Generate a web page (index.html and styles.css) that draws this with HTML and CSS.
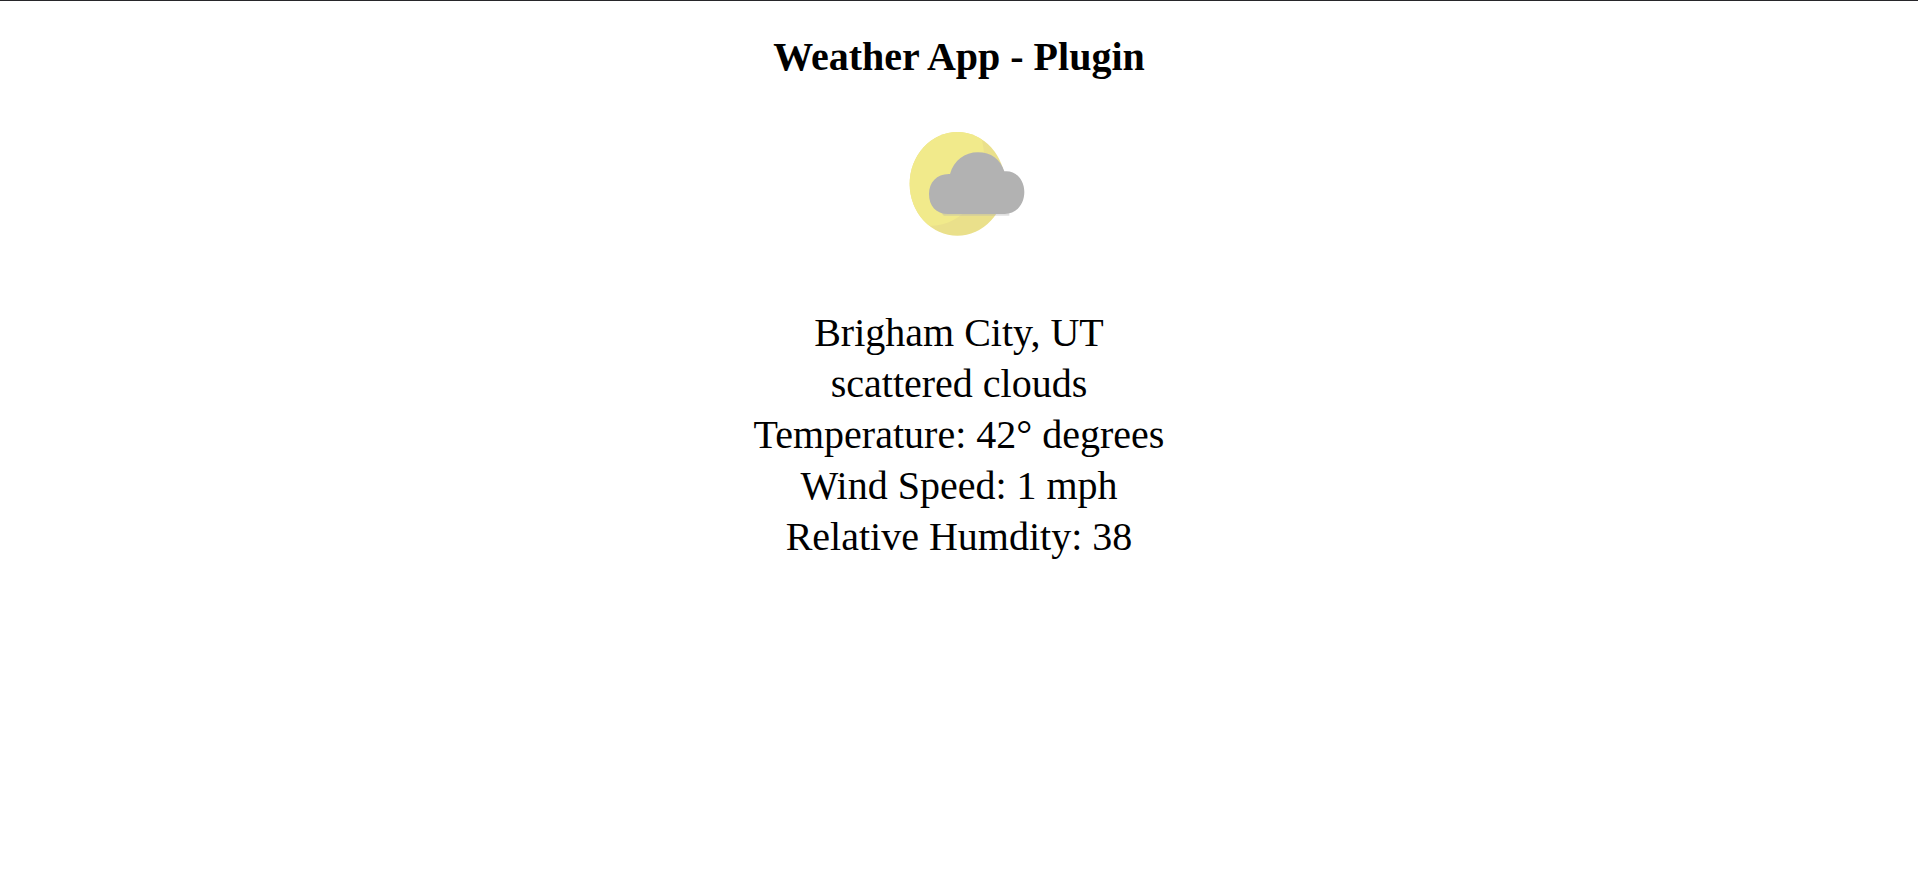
FILE: index.html
```html
<!DOCTYPE html>
<html lang="en">
<head>
<meta charset="utf-8">
<title>Weather App - Plugin</title>
<link rel="stylesheet" href="styles.css">
</head>
<body>
<main class="weather">
  <h1 class="weather-title">Weather App - Plugin</h1>
  <svg class="weather-icon" viewBox="0 0 414 420" role="img" aria-label="scattered clouds">
    <defs>
      <clipPath id="sun"><ellipse cx="202" cy="221.500" rx="143" ry="155.500"/></clipPath>
    </defs>
    <g clip-path="url(#sun)">
      <rect width="414" height="420" fill="#eae08b"/>
      <path d="M0 0H250C278 80 294 150 276 215C262 275 222 319 170 339Q145 348 110 348H0Z" fill="#f1ea8b"/>
    </g>
    <path d="M154 310H358V317H162Z" fill="#b2b2b2" fill-opacity="0.4"/>
    <path d="M174 312C138 312 117 288 117 252C117 216 142 190 180 192C192 151 224 127 264 127C303 127 331 148 343 184C377 180 403 209 403 246C403 283 379 312 344 312Z" fill="#b2b2b2"/>
  </svg>
  <section class="weather-details">
    <div>Brigham City, UT</div>
    <div>scattered clouds</div>
    <div>Temperature: 42° degrees</div>
    <div>Wind Speed: 1 mph</div>
    <div>Relative Humdity: 38</div>
  </section>
</main>
</body>
</html>
```
FILE: styles.css
```css
body {
  margin: 0;
  background: #fff;
  color: #000;
  font-family: "Liberation Serif", "Times New Roman", serif;
  font-size: 40px;
  line-height: 51px;
}

.weather {
  display: flex;
  flex-direction: column;
  align-items: center;
  padding-top: 30px;
  border-top: 1px solid #27262a;
  text-align: center;
}

.weather-title {
  margin: 0;
  font-size: 40px;
  font-weight: bold;
}

.weather-icon {
  width: 138px;
  height: 140px;
  margin: 28px 0 57px;
}
```
